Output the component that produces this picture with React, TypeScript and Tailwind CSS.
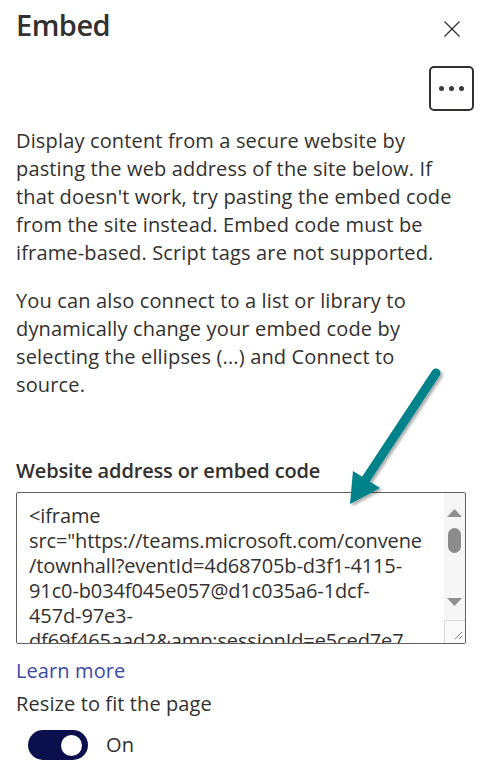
import React from "react";

const codeLines = [
  "<iframe",
  'src="https://teams.microsoft.com/convene',
  "/townhall?eventId=4d68705b-d3f1-4115-",
  "91c0-b034f045e057@d1c035a6-1dcf-",
  "457d-97e3-",
  "df69f465aad2&amp;sessionId=e5ced7e7",
];

function Scrollbar() {
  return (
    <svg width="21" height="150" viewBox="0 0 21 150" className="shrink-0 block">
      <rect x="0" y="0" width="21" height="150" fill="#f6f6f6" />
      <polygon points="3,24 10.5,16 18,24" fill="#8f8f8f" />
      <rect x="4" y="35" width="13" height="25" rx="6.5" fill="#8c8c8c" />
      <polygon points="3,105 10.5,113 18,105" fill="#8f8f8f" />
      <rect x="0.5" y="127.5" width="21" height="23" fill="#fafafa" stroke="#d9d9d9" />
      <line x1="18" y1="139" x2="11" y2="146" stroke="#7a7a7a" strokeWidth="1" />
      <line x1="18" y1="143" x2="15" y2="146" stroke="#7a7a7a" strokeWidth="1" />
    </svg>
  );
}

export default function App() {
  return (
    <div className="relative w-[490px] h-[781px] bg-white overflow-hidden font-['Open_Sans',sans-serif] text-[#323130]">
      {/* Header */}
      <div className="flex items-start justify-between pt-[5px] pl-4 pr-[30px]">
        <h1 className="text-[29px] leading-[40px] font-semibold tracking-[-0.5px]">Embed</h1>
        <svg width="16" height="16" viewBox="0 0 16 16" className="mt-[16px]">
          <line x1="0.5" y1="0.5" x2="15.5" y2="15.5" stroke="#323130" strokeWidth="1.3" />
          <line x1="15.5" y1="0.5" x2="0.5" y2="15.5" stroke="#323130" strokeWidth="1.3" />
        </svg>
      </div>

      {/* Ellipsis button */}
      <div className="flex justify-end pr-4 mt-[21px]">
        <button className="w-[45px] h-[45px] border-2 border-[#323130] rounded-[5px] flex items-center justify-center gap-[5px]">
          <span className="w-[5px] h-[5px] rounded-full bg-[#3b3a39]" />
          <span className="w-[5px] h-[5px] rounded-full bg-[#3b3a39]" />
          <span className="w-[5px] h-[5px] rounded-full bg-[#3b3a39]" />
        </button>
      </div>

      {/* Description */}
      <div className="pl-4 pr-4 mt-[16px] text-[20px] leading-[28px] font-medium tracking-[0.15px] whitespace-nowrap">
        <p>
          Display content from a secure website by
          <br />
          pasting the web address of the site below. If
          <br />
          that doesn't work, try pasting the embed code
          <br />
          from the site instead. Embed code must be
          <br />
          iframe-based. Script tags are not supported.
        </p>
        <p className="mt-[20px]">
          You can also connect to a list or library to
          <br />
          dynamically change your embed code by
          <br />
          selecting the ellipses (...) and Connect to
          <br />
          source.
        </p>
      </div>

      {/* Label */}
      <div className="pl-4 mt-[58px] text-[20px] leading-[28px] font-semibold tracking-[-0.15px]">
        Website address or embed code
      </div>

      {/* Textarea */}
      <div className="ml-4 mt-[7px] w-[450px] h-[152px] border border-[#605e5c] rounded-[2px] flex overflow-hidden">
        <div className="flex-1 overflow-hidden pl-[12px] pt-[10px] text-[20px] leading-[25px] tracking-[-0.12px] text-[#323130]">
          {codeLines.map((l, i) => (
            <div key={i} className="whitespace-pre">
              {l}
            </div>
          ))}
        </div>
        <Scrollbar />
      </div>

      {/* Learn more */}
      <div className="pl-4 mt-[13px] text-[20px] leading-[28px] text-[#3b4aa6] tracking-[0.1px]">
        Learn more
      </div>

      <div className="pl-4 mt-[5px] text-[20px] leading-[28px] tracking-[0.1px]">
        Resize to fit the page
      </div>

      {/* Toggle */}
      <div className="flex items-center ml-[28px] mt-[12px] gap-[18px]">
        <div className="w-[60px] h-[30px] rounded-full bg-[#0b104d] flex items-center justify-end pr-[6px]">
          <span className="w-[21px] h-[21px] rounded-full bg-white" />
        </div>
        <span className="text-[20px] leading-[28px] tracking-[0.1px]">On</span>
      </div>

      {/* Annotation arrow */}
      <svg
        className="absolute left-0 top-0 pointer-events-none"
        width="490"
        height="781"
        viewBox="0 0 490 781"
      >
        <defs>
          <filter id="sh" x="-20%" y="-20%" width="140%" height="140%">
            <feDropShadow dx="2" dy="2" stdDeviation="1.8" floodColor="#000" floodOpacity="0.35" />
          </filter>
        </defs>
        <g filter="url(#sh)">
          <line x1="436" y1="373" x2="364" y2="482" stroke="#03828b" strokeWidth="9" strokeLinecap="round" />
          <polygon points="350,504 353,471 380,488" fill="#03828b" />
        </g>
      </svg>
    </div>
  );
}
